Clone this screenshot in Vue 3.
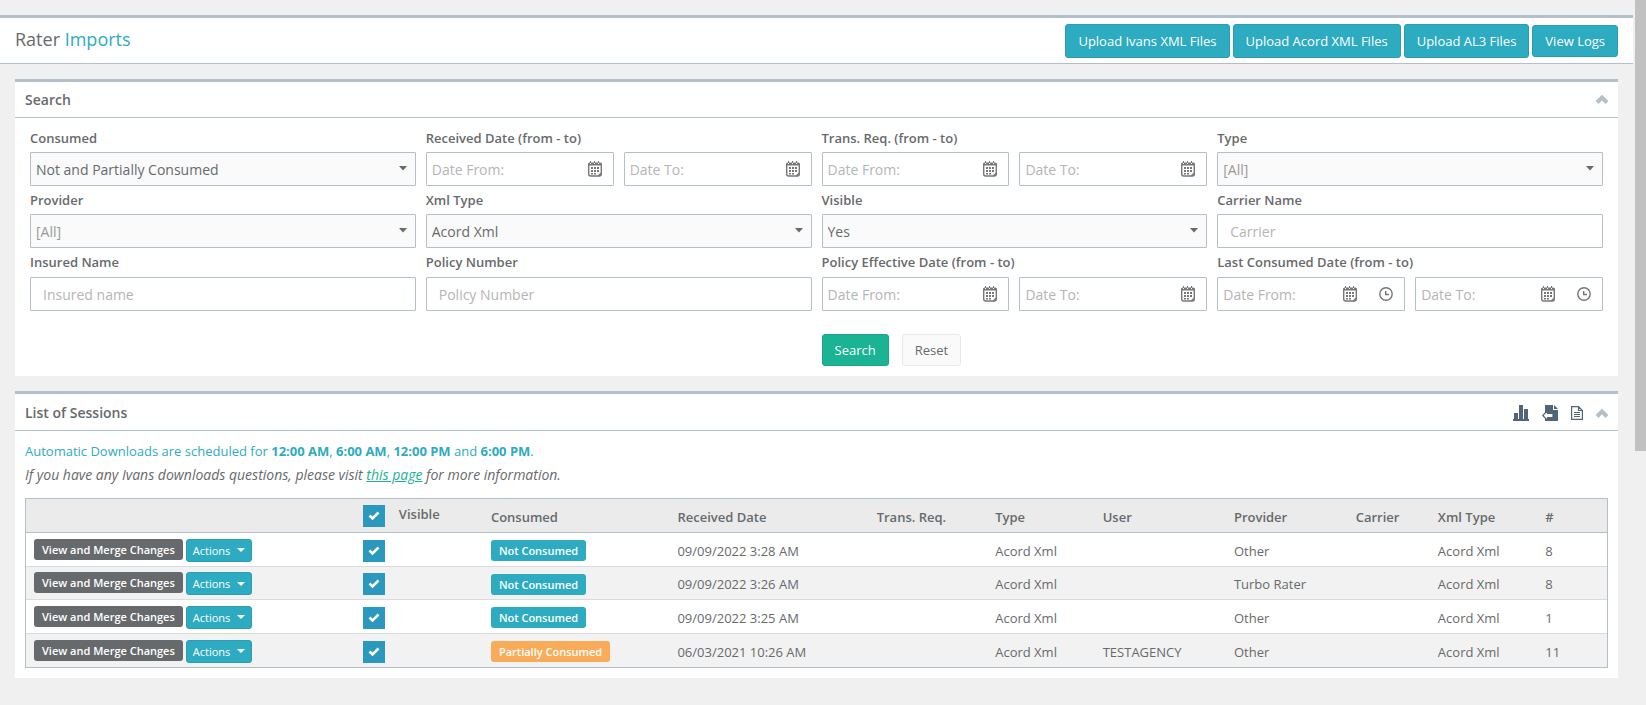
<script setup>
import { reactive, ref } from 'vue'

const uploads = ['Upload Ivans XML Files', 'Upload Acord XML Files', 'Upload AL3 Files']

const fields = [
  { id: 'consumed', label: 'Consumed', kind: 'select', value: 'Not and Partially Consumed' },
  { id: 'received', label: 'Received Date (from - to)', kind: 'dates' },
  { id: 'transreq', label: 'Trans. Req. (from - to)', kind: 'dates' },
  { id: 'type', label: 'Type', kind: 'select', value: '[All]', muted: true },
  { id: 'provider', label: 'Provider', kind: 'select', value: '[All]', muted: true },
  { id: 'xmltype', label: 'Xml Type', kind: 'select', value: 'Acord Xml' },
  { id: 'visible', label: 'Visible', kind: 'select', value: 'Yes' },
  { id: 'carrier', label: 'Carrier Name', kind: 'text', hint: 'Carrier' },
  { id: 'insured', label: 'Insured Name', kind: 'text', hint: 'Insured name' },
  { id: 'policy', label: 'Policy Number', kind: 'text', hint: 'Policy Number' },
  { id: 'effective', label: 'Policy Effective Date (from - to)', kind: 'dates' },
  { id: 'lastconsumed', label: 'Last Consumed Date (from - to)', kind: 'dates', time: true },
]

const dateParts = [
  { key: 'from', hint: 'Date From:' },
  { key: 'to', hint: 'Date To:' },
]

const columns = ['Consumed', 'Received Date', 'Trans. Req.', 'Type', 'User', 'Provider', 'Carrier', 'Xml Type', '#']

const allVisible = ref(true)
const sessions = reactive([
  { id: 1, visible: true, consumed: 'Not Consumed', received: '09/09/2022 3:28 AM', user: '', provider: 'Other', count: 8 },
  { id: 2, visible: true, consumed: 'Not Consumed', received: '09/09/2022 3:26 AM', user: '', provider: 'Turbo Rater', count: 8 },
  { id: 3, visible: true, consumed: 'Not Consumed', received: '09/09/2022 3:25 AM', user: '', provider: 'Other', count: 1 },
  { id: 4, visible: true, consumed: 'Partially Consumed', partial: true, received: '06/03/2021 10:26 AM', user: 'TESTAGENCY', provider: 'Other', count: 11 },
])
</script>

<template>
  <div class="page">
    <main class="content">
      <header class="top">
        <h1>Rater <span>Imports</span></h1>
        <div class="top-actions">
          <button v-for="u in uploads" :key="u" type="button" class="btn info tall">{{ u }}</button>
          <button type="button" class="btn info">View Logs</button>
        </div>
      </header>

      <section class="panel">
        <div class="panel-head">
          <h2>Search</h2>
          <button type="button" class="tool" aria-label="Collapse search">
            <svg class="chevron" width="12" height="8" viewBox="0 0 12 8"><path d="M1 6.500l5-5 5 5" /></svg>
          </button>
        </div>
        <form class="search" @submit.prevent>
          <div v-for="f in fields" :key="f.id" class="field">
            <label :for="f.kind === 'dates' ? f.id + '-from' : f.id">{{ f.label }}</label>
            <div v-if="f.kind === 'select'" class="select-box">
              <select :id="f.id" :class="{ muted: f.muted }"><option>{{ f.value }}</option></select>
              <svg class="arrow" width="8" height="5" viewBox="0 0 8 5"><path d="M0 0h8L4 4.500z" /></svg>
            </div>
            <input v-else-if="f.kind === 'text'" :id="f.id" class="text" type="text" :placeholder="f.hint" />
            <div v-else class="pair">
              <div v-for="p in dateParts" :key="p.key" class="date">
                <input :id="f.id + '-' + p.key" type="text" :placeholder="p.hint" :aria-label="f.label + ' ' + p.key" />
                <button type="button" aria-label="Open calendar">
                  <svg width="14" height="16" viewBox="0 0 14 16">
                    <path class="line" d="M.7 3.500v9.500a2 2 0 0 0 2 2h7.600l3-3V3.500" />
                    <path class="line" d="M10.300 15h1a2 2 0 0 0 2-2v-1" />
                    <path class="solid" d="M0 4.500V3a1.500 1.500 0 0 1 1.500-1.500H2V3h1V1.500h3V3h1V1.500h3V3h1V1.500h1.500A1.500 1.500 0 0 1 14 3v1.500zM2 0h1v2H2zM6 0h1v2H6zM10 0h1v2h-1z" />
                    <path class="solid" d="M6 6h2v2H6zM9 6h2v2H9zM3 9h2v2H3zM6 9h2v2H6zM9 9h2v2H9zM3 12h2v1.500H3zM6 12h2v1.500H6zM3 6h2v2H3z" />
                  </svg>
                </button>
                <button v-if="f.time" type="button" aria-label="Open time list">
                  <svg width="14" height="14" viewBox="0 0 14 14">
                    <circle class="line" cx="7" cy="7" r="6.200" /><path class="line" d="M6.700 4v3.500H10" />
                  </svg>
                </button>
              </div>
            </div>
          </div>
          <div class="submit">
            <button type="submit" class="btn primary">Search</button>
            <button type="reset" class="btn plain">Reset</button>
          </div>
        </form>
      </section>

      <section class="panel">
        <div class="panel-head with-tools">
          <h2>List of Sessions</h2>
          <div class="tools">
            <button type="button" class="tool" aria-label="Chart">
              <svg width="16" height="16" viewBox="0 0 16 16"><path d="M0 14h16v2H0zM1 8h4v7H1zM6 0h4v15H6zM11 4h4v11h-4z" /></svg>
            </button>
            <button type="button" class="tool" aria-label="Import file">
              <svg width="16" height="16" viewBox="0 0 16 16"><path d="M3 0h8v5h5v11H3zM12 0l4 4h-4z" /><path class="outline" d="M5.500 5.500.8 10.500l4.700 5v-3H11v-4H5.500z" /></svg>
            </button>
            <button type="button" class="tool" aria-label="Document">
              <svg width="12" height="14" viewBox="0 0 12 14"><path class="outline" d="M.6.6h6.900l3.900 3.900v8.900H.6zM7.500.6v3.900h3.900M3 6.500h6M3 8.500h6M3 10.500h6" /></svg>
            </button>
            <button type="button" class="tool" aria-label="Collapse sessions">
              <svg class="chevron" width="12" height="8" viewBox="0 0 12 8"><path d="M1 7.500l5-5 5 5" /></svg>
            </button>
          </div>
        </div>
        <div class="list">
          <p class="schedule">Automatic Downloads are scheduled for <b>12:00 AM</b>, <b>6:00 AM</b>, <b>12:00 PM</b> and <b>6:00 PM</b>.</p>
          <p class="help">If you have any Ivans downloads questions, please visit <a href="#">this page</a> for more information.</p>
          <table>
            <colgroup>
              <col class="c-actions" /><col class="c-visible" /><col class="c-consumed" /><col class="c-received" /><col class="c-trans" />
              <col class="c-type" /><col class="c-user" /><col class="c-provider" /><col class="c-carrier" /><col class="c-xml" /><col />
            </colgroup>
            <thead>
              <tr>
                <th></th>
                <th>
                  <label class="check">
                    <span class="box"><input v-model="allVisible" type="checkbox" /><svg v-if="allVisible" width="12" height="10" viewBox="0 0 12 10"><path d="m1.500 4.500 3 3 6-6" /></svg></span>
                    <span class="check-text">Visible</span>
                  </label>
                </th>
                <th v-for="c in columns" :key="c">{{ c }}</th>
              </tr>
            </thead>
            <tbody>
              <tr v-for="s in sessions" :key="s.id">
                <td>
                  <div class="row-actions">
                    <button type="button" class="small dark">View and Merge Changes</button>
                    <button type="button" class="small info">Actions <svg width="8" height="4" viewBox="0 0 8 4"><path d="M0 0h8L4 4z" /></svg></button>
                  </div>
                </td>
                <td>
                  <div class="check">
                    <span class="box"><input v-model="s.visible" type="checkbox" :aria-label="'Visible ' + s.received" /><svg v-if="s.visible" width="12" height="10" viewBox="0 0 12 10"><path d="m1.500 4.500 3 3 6-6" /></svg></span>
                  </div>
                </td>
                <td><span class="badge" :class="{ partial: s.partial }">{{ s.consumed }}</span></td>
                <td>{{ s.received }}</td>
                <td></td>
                <td>Acord Xml</td>
                <td>{{ s.user }}</td>
                <td>{{ s.provider }}</td>
                <td></td>
                <td>Acord Xml</td>
                <td>{{ s.count }}</td>
              </tr>
            </tbody>
          </table>
        </div>
      </section>
    </main>
    <div class="scroll"><div class="thumb"></div></div>
  </div>
</template>

<style>
body { background: #f0f0f0; }
</style>

<style scoped>
* { box-sizing: border-box; }
.page {
  display: flex;
  gap: 2px;
  min-height: 100vh;
  color: #676a6c;
  background: #f0f0f0;
  font: 13px/18px "Open Sans", "Noto Sans", sans-serif;
}
.content { flex: 1; min-width: 0; padding-top: 15px; }
button, input, select { font-family: inherit; color: inherit; margin: 0; }
button { cursor: pointer; }
h1, h2, p { margin: 0; }

.top {
  display: flex;
  justify-content: space-between;
  padding: 0 15px;
  min-height: 49px;
  background: #fff;
  border-top: 3px solid #b3c0c9;
  border-bottom: 1px solid #b3c0c9;
}
h1 { font-size: 18px; line-height: 42px; font-weight: 400; }
h1 span { color: #2dabc1; }
.top-actions { display: flex; align-items: center; gap: 3px; }

.btn {
  height: 32px;
  padding: 0 12px;
  border: 1px solid;
  border-radius: 3px;
  font-size: 13px;
  line-height: 18px;
}
.tall { height: 34px; }
.info { color: #fff; background: #2dabc1; border-color: #2a9db3; }
.primary { color: #fff; background: #1ab394; border-color: #18a689; }
.plain { background: #fafafa; border-color: #e7eaec; }

.panel { margin: 15px 15px 0; background: #fff; border-top: 3px solid #b3c0c9; }
.panel-head {
  display: flex;
  justify-content: space-between;
  align-items: center;
  height: 36px;
  padding: 0 10px;
  border-bottom: 1px solid #b3c0c9;
}
.with-tools { height: 37px; padding-top: 1px; }
h2 { font-size: 14px; line-height: 20px; font-weight: 600; }
.tools { display: flex; align-items: center; gap: 13px; }
.tool { display: flex; padding: 0; border: 0; background: none; }
.tool svg { fill: #506579; }
.tool .outline { fill: #fff; stroke: #506579; stroke-width: 1.200; }
.tool .chevron { fill: none; stroke: #b3c0c9; stroke-width: 4; overflow: visible; }

.search {
  display: grid;
  grid-template-columns: repeat(4, minmax(0, 1fr));
  grid-template-rows: 62px 62px 63px;
  column-gap: 10px;
  padding: 6px 15px 10px;
}
.field { display: flex; flex-direction: column; justify-content: space-between; }
.field label { display: block; line-height: 28px; font-weight: 600; }
.select-box { display: flex; position: relative; }
select, .text, .date {
  width: 100%;
  height: 34px;
  border: 1px solid #b3c0c9;
  border-radius: 1px;
  font-size: 14px;
  background: #fff;
}
select { appearance: none; padding: 1px 24px 0 5px; background: #fafafa; }
select.muted { color: #999; }
.arrow { position: absolute; right: 9px; top: 14px; fill: #676a6c; pointer-events: none; }
.text { display: block; padding: 0 12px; }
input::placeholder { color: #b5b5b5; opacity: 1; }
.pair { display: grid; grid-template-columns: repeat(2, minmax(0, 1fr)); gap: 10px; }
.date { display: flex; }
.date input { flex: 1; min-width: 0; padding: 0 0 0 5px; border: 0; background: none; font-size: 14px; }
.date button { display: flex; align-items: center; justify-content: center; width: 36px; padding: 0; border: 0; background: none; }
.date .line { fill: none; stroke: #777; stroke-width: 1.400; }
.date .solid { fill: #777; }
.submit { grid-column: 3 / 5; display: flex; gap: 13px; padding-top: 23px; }

.list { padding: 9px 10px 10px; }
.list p { line-height: 23px; }
.schedule { color: #2dabc1; }
.help { font-size: 14px; font-style: italic; }
.help a { color: #1ab394; font-weight: 500; text-decoration: underline; }

table {
  width: 100%;
  margin-top: 12px;
  table-layout: fixed;
  border: 1px solid #b3c0c9;
  border-spacing: 0;
}
.c-actions { width: 20.8%; }
.c-visible { width: 8.1%; }
.c-consumed { width: 11.8%; }
.c-received { width: 12.6%; }
.c-trans { width: 7.5%; }
.c-type { width: 6.8%; }
.c-user { width: 8.3%; }
.c-provider { width: 7.7%; }
.c-carrier { width: 5.2%; }
.c-xml { width: 6.8%; }
th, td { padding: 2px 8px 0; text-align: left; white-space: nowrap; }
th:nth-child(2) { padding-top: 0; }
td:first-child { padding-top: 1px; }
th { height: 34px; font-weight: 600; background: #ebebeb; border-bottom: 1px solid #b3c0c9; }
td { height: 33px; border-bottom: 1px solid #d8dcde; }
tbody tr:nth-child(odd) td { height: 34px; }
tbody tr:last-child td { border-bottom: 0; }
tbody tr:nth-child(even) { background: #f2f2f2; }
.row-actions { display: flex; align-items: flex-start; gap: 3px; }
.small { display: flex; align-items: center; border-radius: 3px; font-size: 11px; line-height: 15px; }
.dark { height: 21px; padding: 0 8px; border: 0; color: #fff; background: #676a6c; font-weight: 600; }
.small.info { gap: 7px; height: 23px; padding: 0 6px; border: 1px solid #2a9db3; }
.small svg { fill: #fff; }
.check { display: flex; gap: 14px; }
.check-text { line-height: 18px; }
.box { display: grid; place-items: center; }
.box input, .box svg { grid-area: 1 / 1; }
.box input { appearance: none; width: 22px; height: 22px; background: #2b98bf; }
.box svg { fill: none; stroke: #fff; stroke-width: 2.500; pointer-events: none; }
.badge {
  display: inline-block;
  padding: 3px 8px;
  border-radius: 3px;
  color: #fff;
  background: #2dabc1;
  font-size: 11px;
  line-height: 15px;
  font-weight: 600;
  vertical-align: middle;
}
.partial { background: #f8ac59; }

.scroll { width: 11px; height: 100vh; }
.thumb { height: 64%; background: #c1c1c1; }
</style>
